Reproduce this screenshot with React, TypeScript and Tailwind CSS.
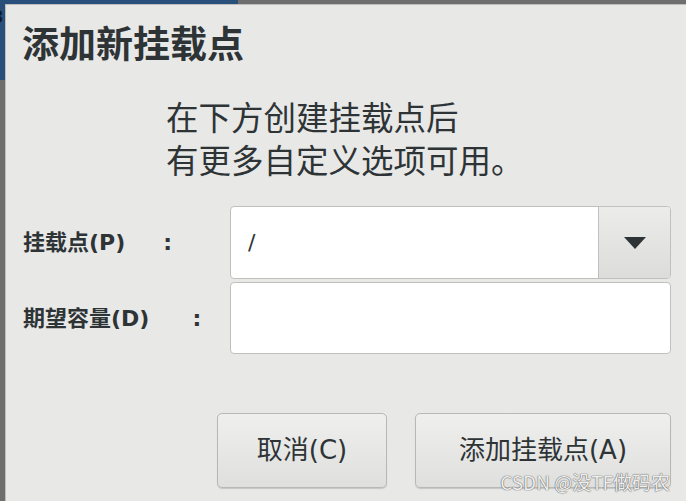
export default function App() {
  const cjk = "font-['Noto_Sans_CJK_SC','Noto_Sans',sans-serif]";
  const mixed = "font-['DejaVu_Sans','Noto_Sans_CJK_SC',sans-serif]";
  return (
    <div className={`relative h-[501px] w-[686px] overflow-hidden bg-[#6e6e6e] pl-[5px] pt-[4px] ${cjk}`}>
      {/* desktop behind the dialog */}
      <div className="absolute left-0 top-0 h-[4px] w-[238px] bg-[#29507a]" />
      <div className="absolute left-0 top-0 flex h-[80px] w-[5px] items-start overflow-hidden bg-[#29507a]">
        <span className="mt-[8px] -ml-[9px] font-['DejaVu_Sans',sans-serif] text-[18px] font-bold leading-none text-[#0d1a2a]">3</span>
      </div>

      <div className="flex h-full flex-col border-l border-t border-[#bdbdbb] bg-[#e8e8e7] pl-[16px] pr-[15px] pt-[19px] text-[#2e3436]">
        <h1 className="text-[37px] font-bold leading-none">添加新挂载点</h1>

        <div className="mt-[33px] pl-[144px] text-[32.5px] leading-[43px]">
          <p>在下方创建挂载点后</p>
          <p>有更多自定义选项可用。</p>
        </div>

        <div className="mt-[26px] flex h-[73px] items-center">
          <label className={`flex w-[208px] items-center pl-px text-[22px] font-bold ${mixed}`}>
            挂载点(P)<span className="ml-[38px]">:</span>
          </label>
          <div className="flex h-full flex-1 overflow-hidden rounded-[4px] border border-[#c0c0bd] bg-white">
            <div className="flex flex-1 items-center pl-[17px] font-['DejaVu_Sans',sans-serif] text-[22px]">/</div>
            <button className="flex w-[72px] items-center justify-center border-l border-[#c0c0bd] bg-gradient-to-b from-[#ececeb] to-[#dcdcda]">
              <svg width="22" height="12" viewBox="0 0 22 12">
                <path d="M0 0 H22 L11 12 Z" fill="#2e3436" />
              </svg>
            </button>
          </div>
        </div>

        <div className="mt-[3px] flex h-[72px] items-center">
          <label className={`flex w-[208px] items-center pl-px text-[22px] font-bold ${mixed}`}>
            期望容量(D)<span className="ml-[43px]">:</span>
          </label>
          <div className="h-full flex-1 rounded-[4px] border border-[#c0c0bd] bg-white" />
        </div>

        <div className={`mt-[59px] flex justify-end gap-[28px] ${mixed}`}>
          <button className="h-[75px] w-[170px] rounded-[5px] border border-[#b8b8b5] bg-gradient-to-b from-[#efefee] to-[#dfdfdd] text-[26px] shadow-[0_1px_1px_rgba(0,0,0,0.15)]">
            取消(C)
          </button>
          <button className="h-[75px] w-[256px] rounded-[5px] border border-[#b8b8b5] bg-gradient-to-b from-[#efefee] to-[#dfdfdd] text-[26px] shadow-[0_1px_1px_rgba(0,0,0,0.15)]">
            添加挂载点(A)
          </button>
        </div>
      </div>

      <span className="absolute bottom-[10px] right-[16px] text-[19px] leading-none text-white/90 [text-shadow:0_0_1px_#555,0_0_1px_#555]">
        CSDN @没TF做码农
      </span>
    </div>
  );
}
